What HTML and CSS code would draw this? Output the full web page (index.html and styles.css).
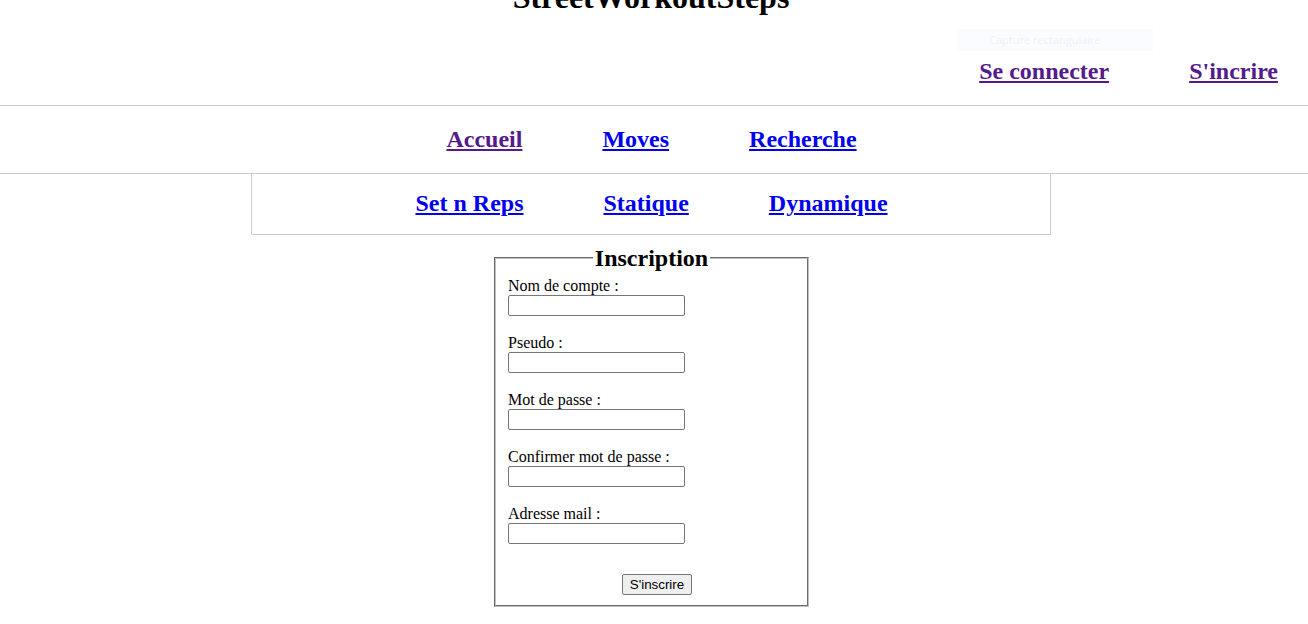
FILE: index.html
```html
<!DOCTYPE html>
<html lang="fr">
<head>
<meta charset="utf-8">
<title>StreetWorkoutSteps - Inscription</title>
<link rel="stylesheet" href="styles.css">
</head>
<body>
<div class="page">
  <header class="top">
    <h1 class="title">StreetWorkoutSteps</h1>
    <div class="auth">
      <a class="visited" href="#">Se connecter</a>
      <a class="visited" href="#">S'incrire</a>
    </div>
    <div class="capture">Capture rectangulaire</div>
  </header>
  <nav class="mainnav">
    <a class="visited" href="#">Accueil</a>
    <a href="#">Moves</a>
    <a href="#">Recherche</a>
  </nav>
  <div class="subwrap">
    <nav class="subnav">
      <a href="#">Set n Reps</a>
      <a href="#">Statique</a>
      <a href="#">Dynamique</a>
    </nav>
  </div>
  <div class="formwrap">
    <form class="form">
      <fieldset class="box">
        <legend class="legend">Inscription</legend>
        <div class="field">
          <label for="nom">Nom de compte :</label>
          <input id="nom" type="text">
        </div>
        <div class="field">
          <label for="pseudo">Pseudo :</label>
          <input id="pseudo" type="text">
        </div>
        <div class="field">
          <label for="mdp">Mot de passe :</label>
          <input id="mdp" type="password">
        </div>
        <div class="field">
          <label for="mdp2">Confirmer mot de passe :</label>
          <input id="mdp2" type="password">
        </div>
        <div class="field">
          <label for="mail">Adresse mail :</label>
          <input id="mail" type="text">
        </div>
        <div class="actions">
          <button type="submit" class="btn">S'inscrire</button>
        </div>
      </fieldset>
    </form>
  </div>
</div>
</body>
</html>
```

FILE: styles.css
```css
html, body {
  margin: 0;
  padding: 0;
  background: #fff;
}
body {
  font-family: "Liberation Serif", "Times New Roman", serif;
  font-size: 16px;
  color: #000;
  overflow: hidden;
}
.page {
  width: 1308px;
  padding-top: 1px;
  margin-top: -1px;
}
.top {
  position: relative;
}
.title {
  margin: -21px 6px 0 0;
  font-size: 32px;
  font-weight: bold;
  line-height: 37px;
  text-align: center;
}
.auth {
  display: flex;
  justify-content: flex-end;
  gap: 80px;
  padding-right: 30px;
  margin-top: 41px;
  line-height: 28px;
  padding-bottom: 20px;
}
a {
  font-size: 24px;
  font-weight: bold;
  color: #0000ee;
  text-decoration: underline;
}
a.visited {
  color: #551a8b;
}
.capture {
  position: absolute;
  left: 957px;
  top: 50px;
  width: 196px;
  height: 22px;
  background: #fbfcff;
  color: #f1f2f6;
  font-family: "Open Sans", "Noto Sans", sans-serif;
  font-size: 11px;
  line-height: 22px;
  padding-left: 32px;
  box-sizing: border-box;
}
.mainnav {
  display: flex;
  justify-content: center;
  gap: 80px;
  border-top: 1px solid #cccccc;
  border-bottom: 1px solid #cccccc;
  padding: 19px 5px 20px 0;
  line-height: 28px;
}
.subwrap {
  display: flex;
  justify-content: center;
  padding-right: 6px;
}
.subnav {
  width: 800px;
  box-sizing: border-box;
  display: flex;
  justify-content: center;
  gap: 80px;
  border: 1px solid #cccccc;
  border-top: none;
  padding: 15px 0 17px 1px;
  line-height: 28px;
}
.formwrap {
  display: flex;
  justify-content: center;
  padding-right: 5px;
  margin-top: 9px;
}
.form {
  margin: 0;
}
.box {
  width: 315px;
  box-sizing: border-box;
  margin: 0;
  border: 2px groove rgb(192, 192, 192);
  padding: 5px 12px 10px 12px;
}
.legend {
  margin: 0 auto;
  padding: 0 2px;
  font-size: 24px;
  font-weight: bold;
  line-height: 28px;
}
.field {
  display: flex;
  flex-direction: column;
  align-items: flex-start;
  margin-bottom: 18px;
}
.field label {
  line-height: 18px;
}
.field input {
  width: 177px;
  height: 21px;
  box-sizing: border-box;
  border: 1px solid #767676;
  border-radius: 2px;
  padding: 1px 2px;
  font-family: "Liberation Sans", Arial, sans-serif;
  font-size: 13.33px;
  margin: 0;
}
.actions {
  display: flex;
  justify-content: center;
  padding-left: 11px;
  margin-top: 30px;
}
.btn {
  font-family: "Liberation Sans", Arial, sans-serif;
  font-size: 13.33px;
  height: 21px;
  padding: 1px 7px;
  background: #efefef;
  border: 1px solid #767676;
  border-radius: 2px;
  color: #000;
}
```
